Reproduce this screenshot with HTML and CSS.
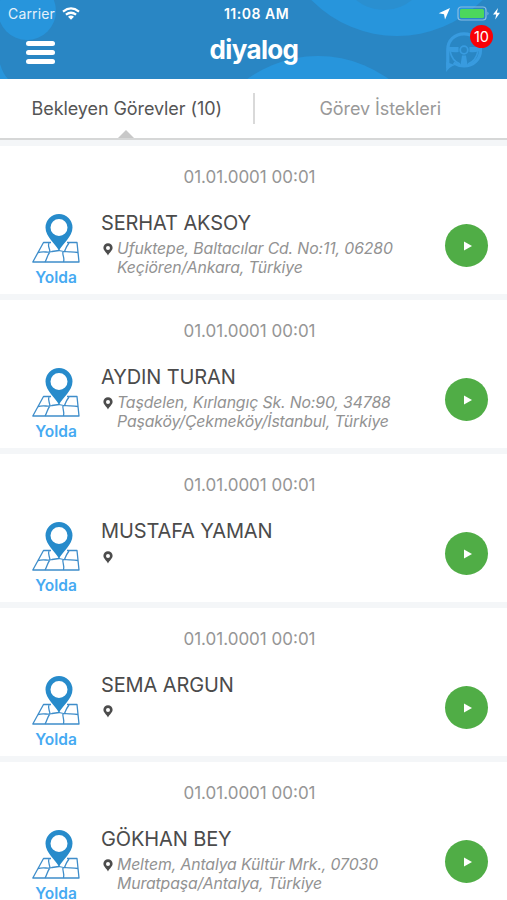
FILE: index.html
```html
<!DOCTYPE html>
<html lang="tr">
<head>
<meta charset="utf-8">
<title>diyalog</title>
<link rel="stylesheet" href="styles.css">
</head>
<body>
<svg class="defs" width="0" height="0">
  <symbol id="map" viewBox="0 0 48 52">
    <g fill="none" stroke="#3e8dca" stroke-width="1.3" stroke-linejoin="round">
      <path d="M19 29.5H11.5L.8 49H47L45 29.5H35"/>
      <path d="M6 39.5C12 38 16 40 20 38.500L27 37.500C34 40 39 38 46 39.500M17 30C15 34 19 36 17.500 39.500C15 43 15 46 13 49M31 38.500C30 42 33 45 31.500 49M37 30C34 34 34 35 32.500 38.500"/>
    </g>
    <path fill="#278bcb" fill-rule="evenodd" d="M27 38C24 31 13.500 24 13.500 14.500A13.500 13.500 0 0 1 40.500 14.500C40.500 24 30 31 27 38ZM27 6A8.500 8.500 0 1 0 27 23A8.500 8.500 0 1 0 27 6Z"/>
  </symbol>
  <symbol id="pin" viewBox="0 0 10 13">
    <path fill="#4c4c4c" fill-rule="evenodd" d="M5 12.500C3.500 9.500.4 7.500.4 4.800A4.600 4.600 0 0 1 9.600 4.800C9.600 7.500 6.500 9.500 5 12.500ZM5 2.900A2 2 0 1 0 5 6.900A2 2 0 1 0 5 2.900Z"/>
  </symbol>
</svg>
<header class="header">
  <svg class="header-art" viewBox="0 0 507 79">
    <circle cx="27" cy="11" r="29" fill="#2795dc"/>
    <circle cx="397" cy="-84" r="120" fill="#2795dc"/>
    <circle cx="384" cy="-34" r="44" fill="#2a8fd0"/>
    <circle cx="318" cy="176" r="120" fill="#2795dc"/>
    <path d="M0 79V64Q3 74 8 79Z" fill="#2795dc"/>
  </svg>
  <div class="status">
    <div class="status-left"><span class="carrier">Carrier</span>
      <svg width="18" height="13" viewBox="0 0 18 13" fill="none" stroke="#fff" stroke-width="2.200"><path d="M1 4.600Q9-1.800 17 4.600M3.900 7.700Q9 3.800 14.100 7.700"/><path d="M9 12.800L6 9.800Q9 7.300 12 9.800Z" fill="#fff" stroke="none"/></svg>
    </div>
    <span class="clock">11:08 AM</span>
    <svg class="status-right" width="64" height="16" viewBox="0 0 64 16"><path fill="#fff" d="M12 2L7 13.500L6 8.300L.7 7.300Z"/><rect x="20" y="1" width="28" height="13" rx="3" fill="none" stroke="#8bbce3" stroke-width="1.200"/><rect x="22" y="3" width="24" height="9" rx="1.500" fill="#4cd75c"/><path d="M49.500 5.500Q51.500 7.500 49.500 9.500Z" fill="#8bbce3"/><path fill="#fff" d="M60 2L55 8.500H58.200L57.200 13.500L62 6.700H58.900Z"/></svg>
  </div>
  <div class="navbar">
    <div class="menu"><i></i><i></i><i></i></div>
    <h1>diyalog</h1>
    <div class="wheel">
      <svg width="40" height="42" viewBox="0 0 40 42"><g fill="none" stroke="#389bdf"><path stroke-width="3.200" d="M2.800 37V18.500C2.800 9 10 2.800 19 2.800C28.500 2.800 35.500 10 35.500 19S28.500 35 19 35C14.500 35 11 33.500 8.500 32"/><circle cx="19" cy="19" r="3.800" stroke-width="1.800"/><path stroke-width="1.600" d="M5 20Q7 30 15 33M33 20Q31 30 23 33"/></g><path fill="#389bdf" d="M1.200 31L10 34Q4 36 1.200 41ZM4 16H13.500V21Q8 22 4 20ZM24.500 16H34V20Q30 22 24.500 21ZM17 24.500H21L22.500 34H15.500Z"/></svg>
      <span class="badge">10</span>
    </div>
  </div>
</header>
<nav class="tabs">
  <div class="tab active"><span class="tab-one">Bekleyen Görevler (10)</span></div>
  <div class="tab"><span class="tab-two">Görev İstekleri</span></div>
</nav>
<main class="list">
  <article class="card">
    <time>01.01.0001 00:01</time>
    <div class="row">
      <div class="state"><svg width="48" height="52"><use href="#map"/></svg><b>Yolda</b></div>
      <div class="info"><h2>SERHAT AKSOY</h2><div class="place"><svg width="10" height="13"><use href="#pin"/></svg><address>Ufuktepe, Baltacılar Cd. No:11, 06280<br>Keçiören/Ankara, Türkiye</address></div></div>
      <div class="play"><svg width="8" height="10" viewBox="0 0 8 10"><path d="M0 0.600L8 5L0 9.400Z" fill="#fff"/></svg></div>
    </div>
  </article>
  <article class="card">
    <time>01.01.0001 00:01</time>
    <div class="row">
      <div class="state"><svg width="48" height="52"><use href="#map"/></svg><b>Yolda</b></div>
      <div class="info"><h2>AYDIN TURAN</h2><div class="place"><svg width="10" height="13"><use href="#pin"/></svg><address>Taşdelen, Kırlangıç Sk. No:90, 34788<br>Paşaköy/Çekmeköy/İstanbul, Türkiye</address></div></div>
      <div class="play"><svg width="8" height="10" viewBox="0 0 8 10"><path d="M0 0.600L8 5L0 9.400Z" fill="#fff"/></svg></div>
    </div>
  </article>
  <article class="card">
    <time>01.01.0001 00:01</time>
    <div class="row">
      <div class="state"><svg width="48" height="52"><use href="#map"/></svg><b>Yolda</b></div>
      <div class="info"><h2>MUSTAFA YAMAN</h2><div class="place"><svg width="10" height="13"><use href="#pin"/></svg></div></div>
      <div class="play"><svg width="8" height="10" viewBox="0 0 8 10"><path d="M0 0.600L8 5L0 9.400Z" fill="#fff"/></svg></div>
    </div>
  </article>
  <article class="card">
    <time>01.01.0001 00:01</time>
    <div class="row">
      <div class="state"><svg width="48" height="52"><use href="#map"/></svg><b>Yolda</b></div>
      <div class="info"><h2>SEMA ARGUN</h2><div class="place"><svg width="10" height="13"><use href="#pin"/></svg></div></div>
      <div class="play"><svg width="8" height="10" viewBox="0 0 8 10"><path d="M0 0.600L8 5L0 9.400Z" fill="#fff"/></svg></div>
    </div>
  </article>
  <article class="card">
    <time>01.01.0001 00:01</time>
    <div class="row">
      <div class="state"><svg width="48" height="52"><use href="#map"/></svg><b>Yolda</b></div>
      <div class="info"><h2>GÖKHAN BEY</h2><div class="place"><svg width="10" height="13"><use href="#pin"/></svg><address>Meltem, Antalya Kültür Mrk., 07030<br>Muratpaşa/Antalya, Türkiye</address></div></div>
      <div class="play"><svg width="8" height="10" viewBox="0 0 8 10"><path d="M0 0.600L8 5L0 9.400Z" fill="#fff"/></svg></div>
    </div>
  </article>
</main>
</body>
</html>
```
FILE: styles.css
```css
* { box-sizing: border-box; }
body { margin: 0; width: 507px; height: 900px; overflow: hidden; background: #fff; font-family: Inter, sans-serif; }
svg { display: block; flex: none; }
.defs { position: absolute; }
h1, h2 { margin: 0; }
.header { position: relative; height: 79px; background: #2986c4; overflow: hidden; color: #fff; }
.header-art { position: absolute; inset: 0; width: 507px; height: 79px; }
.status { position: relative; display: grid; grid-template-columns: 1fr auto 1fr; align-items: center; height: 27px; padding: 0 5px 0 8px; }
.status-left { display: flex; align-items: center; gap: 7px; }
.carrier { font-size: 14px; letter-spacing: .15px; color: #e4f0fa; }
.clock { font-size: 14px; font-weight: 600; letter-spacing: .5px; padding-left: 3px; }
.status-right { justify-self: end; }
.navbar { position: relative; display: grid; grid-template-columns: 1fr auto 1fr; height: 52px; padding: 0 22px 0 26px; }
.menu { display: flex; flex-direction: column; gap: 4px; padding-top: 14px; }
.menu i { width: 29px; height: 5px; border-radius: 2.5px; background: #fff; }
h1 { font-size: 26px; line-height: 32px; font-weight: 700; letter-spacing: -.65px; padding: 7px 3px 0 0; }
.wheel { position: relative; justify-self: end; width: 40px; padding-top: 4px; }
.badge { position: absolute; left: 25px; top: -2px; width: 23px; height: 23px; border-radius: 50%; background: #f90006; font-size: 14.5px; line-height: 23px; text-align: center; }
.tabs { display: flex; height: 61px; border-bottom: 2px solid #d6d7d7; }
.tab { position: relative; flex: 1; height: 59px; text-align: center; font-size: 18px; line-height: 60px; letter-spacing: -.08px; color: #999; }
.active { color: #555; }
.active::before { content: ""; position: absolute; right: -1px; top: 14px; width: 2px; height: 31px; background: #d9d9d9; }
.active::after { content: ""; position: absolute; left: 118px; bottom: 0; border: 8px solid transparent; border-top: 0; border-bottom-color: #c8c8c8; }
.list { display: flex; flex-direction: column; gap: 6px; padding-top: 6px; background: #f4f6f8; }
.card { flex: none; height: 148px; background: #fff; }
time { display: block; height: 40px; padding-top: 21px; padding-right: 8px; text-align: center; font-size: 17px; line-height: 20px; color: #969696; }
.row { display: flex; height: 108px; padding: 0 19px 0 32px; }
.state { width: 69px; padding-top: 27px; }
.state b { display: block; width: 48px; text-align: center; font-size: 15.5px; font-weight: 600; line-height: 12px; color: #46aaf2; padding-top: 7px; }
.info { flex: 1; padding-top: 24px; }
h2 { font-size: 20px; line-height: 26px; font-weight: 400; letter-spacing: -.12px; color: #4b4b4b; white-space: nowrap; }
.place { display: flex; gap: 4px; padding-left: 2px; }
.place svg { margin-top: 7px; }
address { font-size: 15.8px; line-height: 19px; letter-spacing: -.12px; color: #929292; white-space: nowrap; padding-top: 3px; }
.play { width: 43px; height: 43px; border-radius: 50%; background: #50ad46; margin-top: 38px; display: flex; align-items: center; justify-content: center; padding-left: 3px; }
```
